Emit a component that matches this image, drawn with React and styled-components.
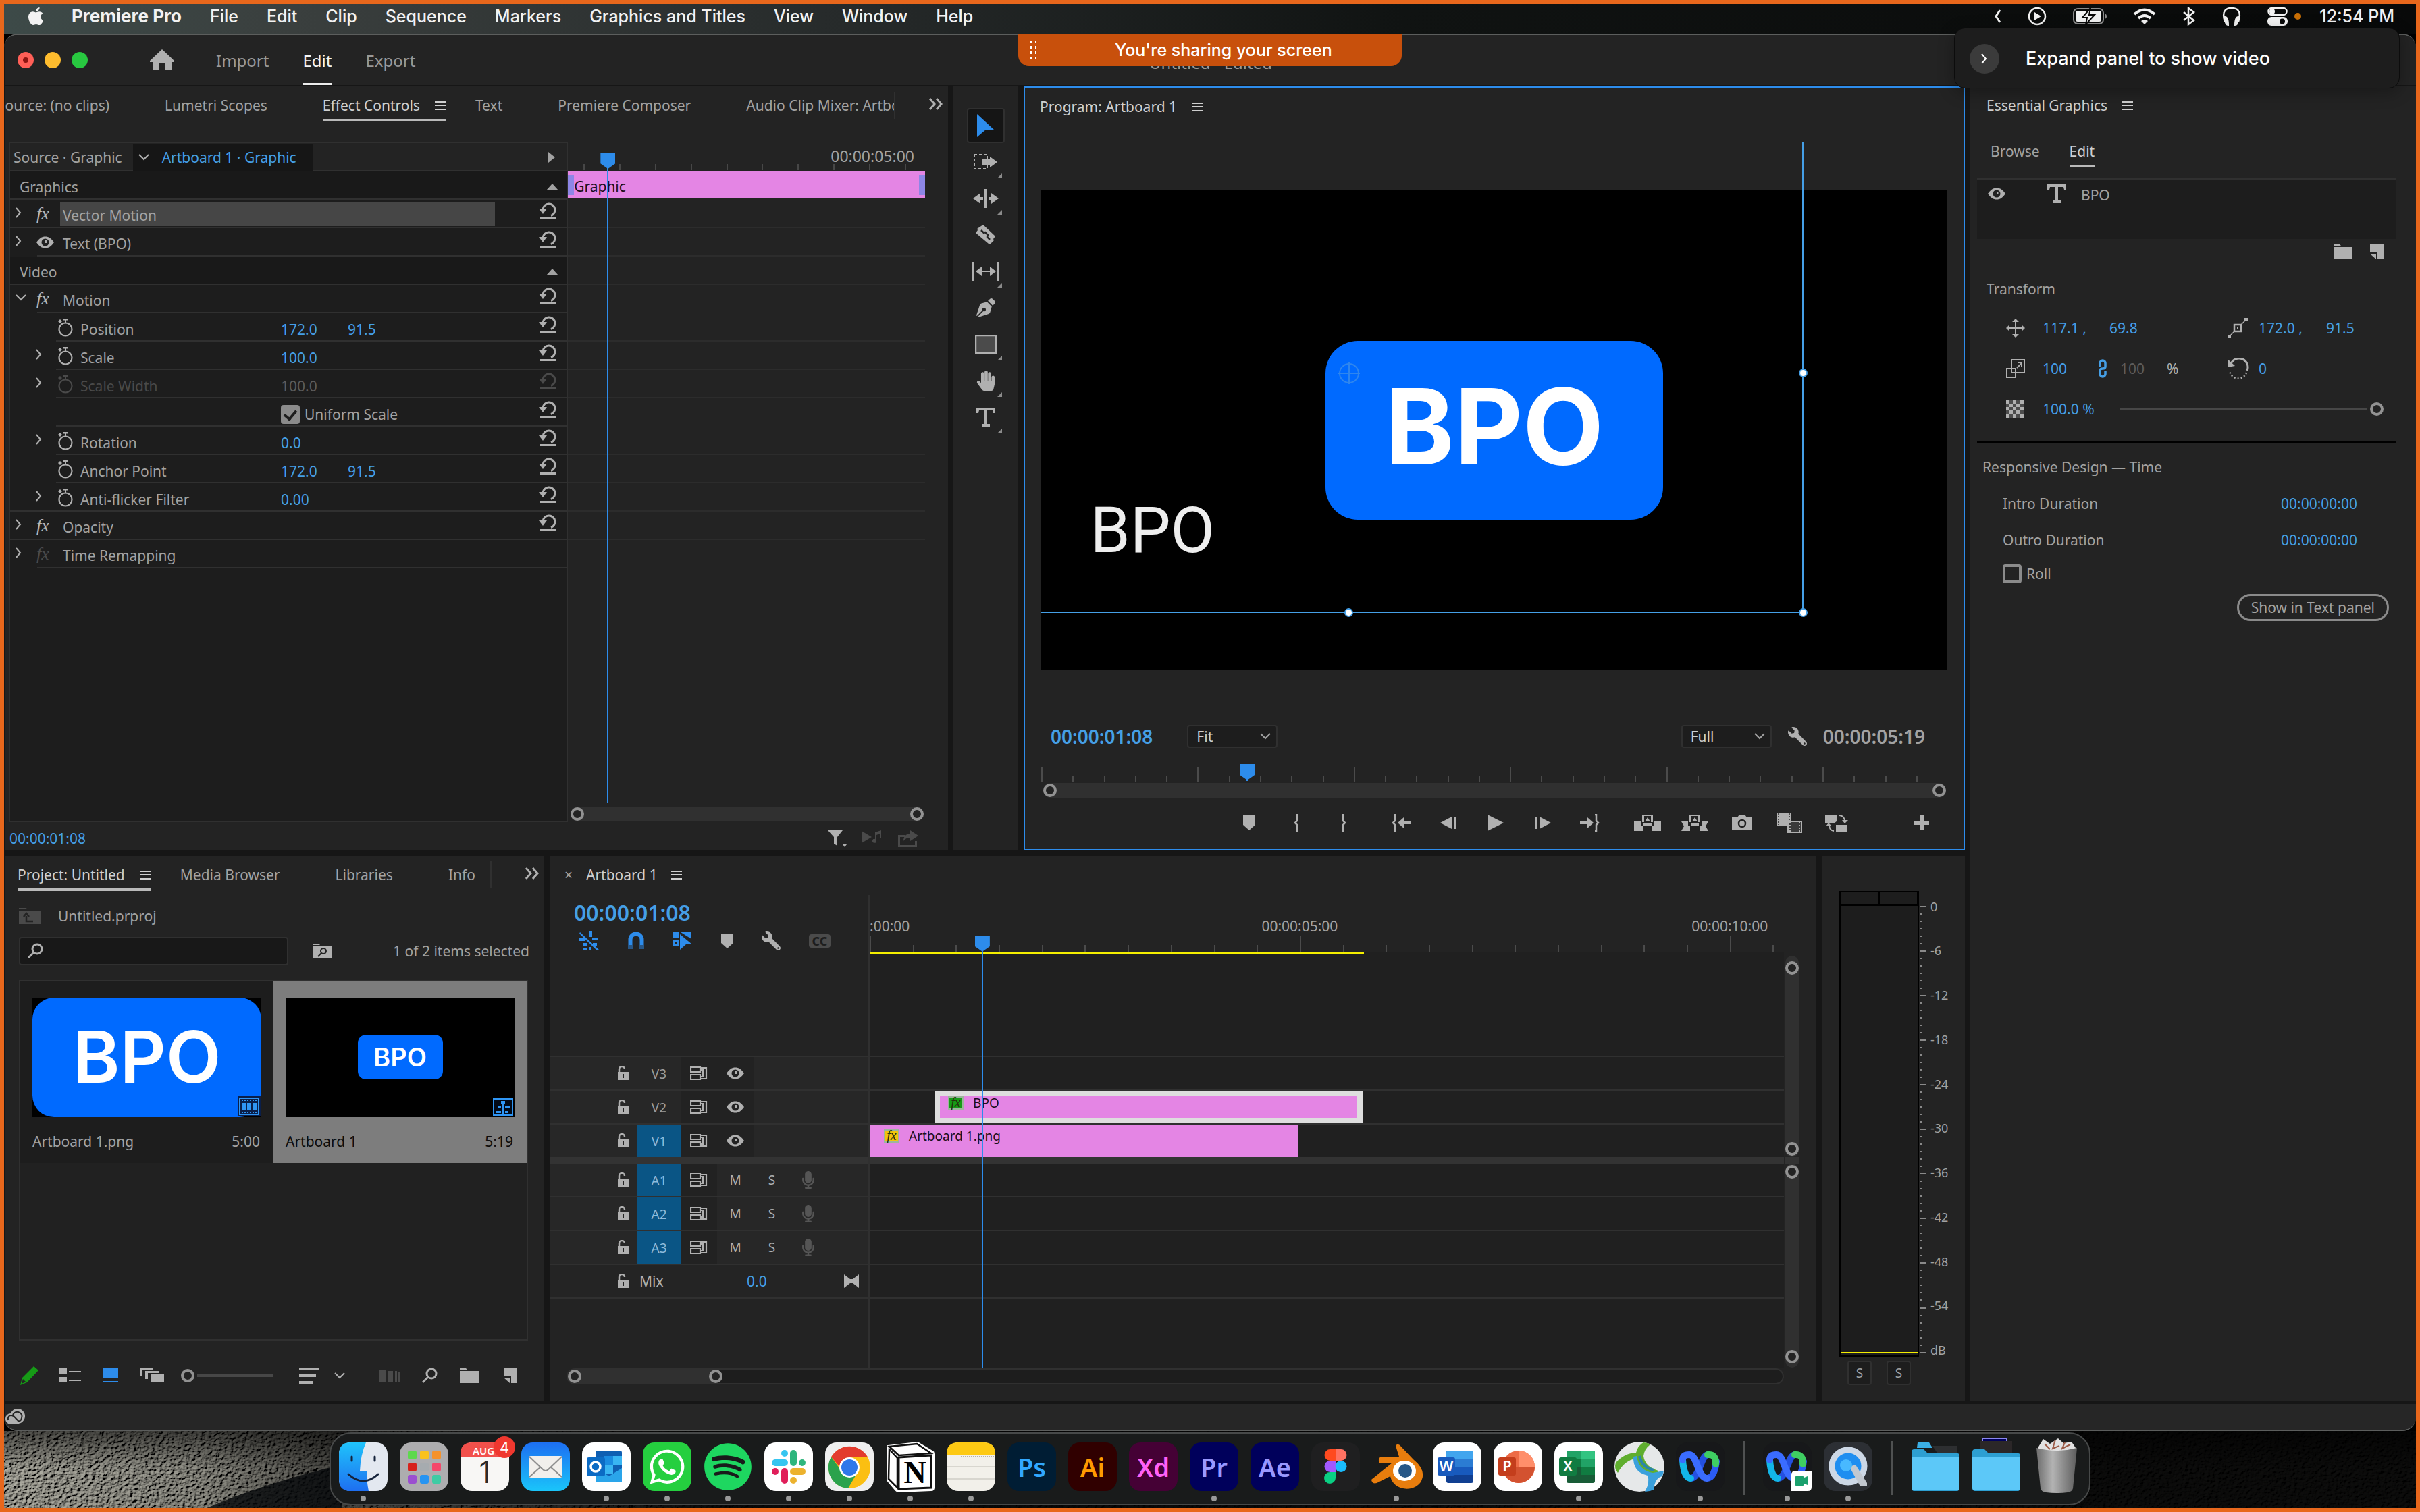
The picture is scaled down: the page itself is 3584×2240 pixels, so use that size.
import React from "react"
import styled, { createGlobalStyle, css } from "styled-components"
import {
  FaApple,
  FaHandPaper,
  FaMicrophone,
  FaPenNib,
  FaSpotify,
  FaWhatsapp,
  FaWrench,
} from "react-icons/fa"

const c = {
  frame: "#e8671c",
  gutter: "#161616",
  panel: "#232323",
  well: "#1d1d1d",
  line: "#303030",
  icon: "#b0b0b0",
  dim: "#4a4a4a",
  text: "#a2a2a2",
  bright: "#cfcfcf",
  blue: "#2d8ceb",
  hot: "#459fe6",
  clip: "#e485e4",
  brand: "#006aff",
}

const ui = `"Noto Sans", "Open Sans", sans-serif`
const system = `Inter, "Liberation Sans", sans-serif`

const GlobalStyle = createGlobalStyle`
  * {
    box-sizing: border-box;
  }

  body {
    margin: 0;
    background: #000;
    color: ${c.text};
    font: 21px/28px ${ui};
  }

  ul, ol, h1, h2, p {
    margin: 0;
    padding: 0;
    list-style: none;
    font: inherit;
  }

  button, input, select {
    margin: 0;
    padding: 0;
    border: 0;
    background: none;
    color: inherit;
    font: inherit;
  }

  a {
    color: inherit;
    text-decoration: none;
  }

  svg {
    display: block;
    flex: none;
  }
`

/* ---------- icons ---------- */

const icons = {
  menu: [16, 14, <path d="M0 1h16v2H0zM0 6h16v2H0zM0 12h16v2H0z" />],
  more: [22, 18, <path d="M2 1l7 8-7 8M12 1l7 8-7 8" fill="none" stroke="currentColor" strokeWidth="3" />],
  right: [10, 16, <path d="M1 1l6 7-6 7" fill="none" stroke="currentColor" strokeWidth="2" />],
  down: [16, 10, <path d="M1 1l7 7 7-7" fill="none" stroke="currentColor" strokeWidth="2" />],
  triRight: [12, 18, <path d="M1 1l10 8-10 8z" />],
  triUp: [18, 12, <path d="M9 1l9 10H0z" />],
  reset: [
    28,
    26,
    <>
      <path d="M7 10a9 9 0 1 1 12 9.5" fill="none" stroke="currentColor" strokeWidth="3" />
      <path d="M1 9h12l-6 8zM3 22h24v3H3z" />
    </>,
  ],
  watch: [
    24,
    28,
    <>
      <circle cx="12" cy="17" r="9.5" fill="none" stroke="currentColor" strokeWidth="2.2" />
      <path d="M8 1h8v2.5H8zM11 3h2v4h-2zM1 5l3-3 3 3-3 3z" />
    </>,
  ],
  eye: [
    26,
    18,
    <>
      <path d="M0 9C4 3 8 0.500 13 0.500S22 3 26 9C22 15 18 17.500 13 17.500S4 15 0 9z" />
      <circle cx="13" cy="9" r="5.5" fill="#222" />
      <path d="M13 6h2.500v4H13z" />
    </>,
  ],
  home: [36, 32, <path d="M18 0l18 17v2h-4v12h-9V20h-10v11H4V19H0v-2z" />],
  select: [26, 34, <path d="M0 0l25 23H13L0 34z" />],
  trackSelect: [
    36,
    24,
    <>
      <path d="M1 1h19v21H1z" fill="none" stroke="currentColor" strokeWidth="2" strokeDasharray="4 3" />
      <path d="M13 8h11V4l11 8-11 8v-4H13z" />
    </>,
  ],
  ripple: [38, 28, <path d="M17 0h4v28h-4zM0 14l11-8v6h4v4h-4v6zM38 14L27 6v6h-4v4h4v6z" />],
  razor: [
    32,
    32,
    <>
      <path d="M12 1l18 17-3 4 1 2-6 6-2-1L1 13l3-4-1-2z" />
      <path d="M9 9l4 4 2-1 4 4-1 3 4 4" fill="none" stroke="#232323" strokeWidth="2.5" />
    </>,
  ],
  slip: [40, 28, <path d="M0 0h3v28H0zM37 0h3v28h-3zM5 14l9-7v6h12V7l9 7-9 7v-6H14v6z" />],
  rect: [32, 28, <path d="M1 1h30v26H1z" fill="#4b4b4b" stroke="currentColor" strokeWidth="2.5" />],
  type: [28, 28, <path d="M0 0h28v8h-3l-1-4h-8v20h4v4H8v-4h4V4H4L3 8H0z" />],
  marker: [18, 22, <path d="M0 0h18v14l-9 8-9-8z" />],
  braceL: [10, 26, <path d="M8 1H6v9l-3 3 3 3v9h2" fill="none" stroke="currentColor" strokeWidth="2.5" />],
  braceR: [10, 26, <path d="M2 1h2v9l3 3-3 3v9H2" fill="none" stroke="currentColor" strokeWidth="2.5" />],
  goIn: [
    30,
    26,
    <>
      <path d="M8 1H6v9l-3 3 3 3v9h2" fill="none" stroke="currentColor" strokeWidth="2.5" />
      <path d="M10 13l9-8v6h11v4H19v6z" />
    </>,
  ],
  goOut: [
    30,
    26,
    <>
      <path d="M22 1h2v9l3 3-3 3v9h-2" fill="none" stroke="currentColor" strokeWidth="2.5" />
      <path d="M20 13l-9-8v6H0v4h11v6z" />
    </>,
  ],
  stepBack: [26, 20, <path d="M18 1v18L1 10zM21 1h3v18h-3z" />],
  play: [26, 24, <path d="M1 0l24 12L1 24z" />],
  stepOn: [26, 20, <path d="M8 1v18l17-9zM2 1h3v18H2z" />],
  lift: [40, 26, <path d="M0 11h10v6h4v-3h12v3h4v-6h10v14H27v-8H13v8H0zM12 1h16v11h-3V3H15v9h-3zM20 5l4 6h-8z" />],
  extract: [40, 26, <path d="M0 11h10v6h4v-3h12v3h4v-6h10l-4 7 4 7H27v-8H13v8H0l4-7zM12 1h16v11h-3V3H15v9h-3zM20 5l4 6h-8z" />],
  camera: [
    30,
    24,
    <>
      <path d="M0 4h8l3-4h8l3 4h8v19H0z" />
      <circle cx="15" cy="13" r="5" fill="none" stroke="#232323" strokeWidth="2.5" />
    </>,
  ],
  film: [
    38,
    30,
    <>
      <path d="M0 0h22v19H0z" />
      <path d="M17 13h20v16H17z" fill="#3a3a3a" stroke="currentColor" strokeWidth="2" />
      <path d="M3 1v17M19 1v10" stroke="#232323" strokeDasharray="2 2" strokeWidth="1.5" />
      <path d="M20 14v15M34 14v15" stroke="currentColor" strokeDasharray="2 2" strokeWidth="2" />
    </>,
  ],
  proxy: [
    34,
    28,
    <>
      <path d="M0 2h18v9l-5 4H0zM16 17h16v11H16z" />
      <path d="M21 3q8 1 8 9M6 17q0 8 7 9" fill="none" stroke="currentColor" strokeWidth="2" />
      <path d="M25 10h9l-5 5zM1 19h9l-5-5z" />
    </>,
  ],
  plus: [22, 22, <path d="M8 0h6v8h8v6h-8v8H8v-8H0V8h8z" />],
  search: [
    24,
    24,
    <path d="M10 14L2 22M15 2a7 7 0 1 1 0 14 7 7 0 0 1 0-14z" fill="none" stroke="currentColor" strokeWidth="3" />,
  ],
  folder: [28, 22, <path d="M0 0h9l2 2H0zM0 4h28v18H0z" />],
  page: [20, 22, <path d="M0 0h20v22h-9V12H0zM0 14h9v8z" />],
  folderUp: [
    32,
    24,
    <>
      <path d="M0 0h11l1 2H0zM0 4h32v20H0z" />
      <path d="M11 12v8h10M7 13l4-5 4 5" stroke="#232323" strokeWidth="2.5" fill="none" />
    </>,
  ],
  folderFind: [
    28,
    22,
    <>
      <path d="M0 0h9l2 2H0zM0 4h28v18H0z" />
      <path d="M13 14l-5 5M16 7a4 4 0 1 1 0 8 4 4 0 0 1 0-8z" stroke="#232323" strokeWidth="2" fill="none" />
    </>,
  ],
  funnel: [28, 26, <path d="M0 1h22l-8 10v13l-5-3V11zM22 22h6l-3 4z" />],
  playNote: [32, 22, <path d="M0 2l15 9-15 9zM20 15V4l9-3v12h-2V6l-5 2v9a3 3 0 1 1-2-3z" />],
  exportBox: [30, 26, <path d="M0 8h10v3H3v12h22v-6h3v9H0zM18 1l12 8-12 8v-5c-5 0-8 2-10 5 0-7 4-11 10-11z" />],
  pencil: [28, 28, <path d="M20 0l7 6L10 24 0 28l3-11zM4 19l-2 7 6-3z" fillRule="evenodd" />],
  listView: [32, 22, <path d="M0 0h11v8H0zM14 4h18v2H14zM0 13h11v8H0zM14 17h18v2H14z" />],
  iconView: [22, 22, <path d="M0 0h22v15H0zM0 19h22v2H0z" />],
  freeform: [36, 22, <path d="M0 0h20v3H4v9H0zM8 4h20v3H12v9H8zM16 8h20v13H16z" />],
  sort: [30, 26, <path d="M0 1h30v4H0zM0 11h25v4H0zM0 21h21v4H0z" />],
  storyboard: [32, 18, <path d="M0 0h10v18H0zM13 2h8v16h-8zM24 2h3v16h-3zM29 4h2v14h-2z" />],
  move: [28, 28, <path d="M13 5h2v8h8V9l5 5-5 5v-4h-8v8h4l-5 5-5-5h4v-8H5v4l-5-5 5-5v4h8V5H9l5-5 5 5z" />],
  anchor: [
    30,
    30,
    <>
      <path d="M2 28L28 2" stroke="currentColor" strokeWidth="1.5" />
      <path d="M0 25h5v5H0zM25 0h5v5h-5z" />
      <path d="M10 10h10v10H10z" fill="#232323" stroke="currentColor" strokeWidth="2.5" />
      <path d="M14 14h2v2h-2z" />
    </>,
  ],
  scale: [
    28,
    28,
    <path d="M8 1h19v19H8zM1 14h13v13H1zM16 13l7-7M17 5h6v6" fill="none" stroke="currentColor" strokeWidth="2" />,
  ],
  link: [
    16,
    28,
    <path d="M4 11V6a4 4 0 0 1 8 0v5q0 3-4 3t-4 3v5a4 4 0 0 0 8 0v-5" fill="none" stroke="currentColor" strokeWidth="3.5" />,
  ],
  rotate: [
    32,
    32,
    <>
      <path d="M5 9a13 13 0 0 1 24 10" fill="none" stroke="currentColor" strokeWidth="3" />
      <path d="M0 2l11 10-10 2z" />
      <path d="M28 22A13 13 0 0 1 3 20" fill="none" stroke="currentColor" strokeWidth="2.5" strokeDasharray="2 3" />
    </>,
  ],
  checker: [
    26,
    26,
    <>
      <path d="M0 0h26v26H0z" fill="#4d4d4d" />
      <path d="M0 0h5v5H0zM10 0h5v5h-5zM20 0h6v5h-6zM5 5h5v5H5zM15 5h5v5h-5zM0 10h5v5H0zM10 10h5v5h-5zM20 10h6v5h-6zM5 15h5v5H5zM15 15h5v5h-5zM0 20h5v6H0zM10 20h5v6h-5zM20 20h6v6h-6z" />
    </>,
  ],
  lock: [
    18,
    22,
    <>
      <path d="M3 10V5a4 4 0 0 1 8 0" fill="none" stroke="currentColor" strokeWidth="2.5" />
      <path d="M1 9h16v12H1z" />
      <path d="M8 12h2v6H8z" fill="#232323" />
    </>,
  ],
  sync: [
    26,
    20,
    <path d="M1 1h14v7H1zM1 12h14v7H1zM16 2h8v16h-8M16 5h3v10h-3" fill="none" stroke="currentColor" strokeWidth="2.2" />,
  ],
  nest: [
    30,
    28,
    <path d="M14 0h5v8h-5zM0 10h9v4H0zM19 9h9v4h-9zM5 17h7v4H5zM20 17h6v4h-6zM6 24h6v4H6zM15 23h3v5h-3zM1 1l28 26-2 2L0 3z" />,
  ],
  magnet: [
    24,
    26,
    <>
      <path d="M3.5 19v-8a8.5 8.5 0 0 1 17 0v8" fill="none" stroke="currentColor" strokeWidth="6" />
      <path d="M0 19h7v6H0zM17 19h7v6h-7z" opacity=".5" />
    </>,
  ],
  linked: [
    30,
    28,
    <path d="M0 1h9v9H0zM0 13h9v9H0zm3 3v3h3v-3zM12 1h16v10L12 1zM11 4l18 15h-9l-9 8z" fillRule="evenodd" />,
  ],
  bowtie: [22, 20, <path d="M0 0l9 7h4l9-7v20l-9-7H9l-9 7z" />],
}

const Icon = ({ name, color }) => {
  const [w, h, body] = icons[name]
  return (
    <svg width={w} height={h} viewBox={`0 0 ${w} ${h}`} fill="currentColor" color={color} aria-hidden="true">
      {body}
    </svg>
  )
}

/* ---------- shell ---------- */

const Frame = styled.div`
  display: flex;
  flex-direction: column;
  min-height: 100vh;
  border: 6px solid ${c.frame};
  background: #000;
`

const MenuBar = styled.nav`
  display: flex;
  align-items: center;
  height: 44px;
  padding: 0 32px 9px;
  background: linear-gradient(90deg, #3d4a48, #3a3f3e 12%, #262a2a 35%, #101312 58%, #080909);
  color: #f2f2f2;
  font: 500 25px/32px ${system};

  ul {
    display: flex;
    gap: 42px;
    margin-left: 38px;
  }
`

const AppName = styled.strong`
  font-size: 26px;
  font-weight: 700;
`

const Status = styled.div`
  display: flex;
  align-items: center;
  gap: 39px;
  margin-left: auto;
`

const PrivacyDot = styled.i`
  width: 10px;
  height: 10px;
  margin: 0 -12px 0 -29px;
  border-radius: 50%;
  background: #c96f06;
`

const Window = styled.div`
  position: relative;
  display: flex;
  flex: 1;
  flex-direction: column;
  padding-left: 2px;
  border: solid #5c5e5d;
  border-width: 2px 0;
  border-radius: 20px;
  background: ${c.gutter};
  overflow: hidden;
`

const TitleBar = styled.header`
  display: grid;
  grid-template-columns: 1fr auto 1fr;
  height: 76px;
  border-bottom: 2px solid ${c.gutter};
  background: ${c.panel};
  font-size: 24px;

  h1 {
    align-self: center;
    padding-top: 8px;
    color: #9a9a9a;
  }
`

const TitleLeft = styled.div`
  display: flex;
  align-items: center;
  padding-left: 18px;
`

const Light = styled.button`
  display: grid;
  place-items: center;
  width: 24px;
  height: 24px;
  margin-right: 16px;
  border-radius: 50%;
  background: ${p => p.$color};

  &:first-child:after {
    content: "";
    width: 8px;
    height: 8px;
    border-radius: 50%;
    background: #8e1512;
  }
`

const Home = styled.button`
  margin: 0 62px 0 76px;
  color: ${c.icon};
`

const Mode = styled.a`
  align-self: stretch;
  margin-right: 50px;
  padding-top: 24px;
  border-bottom: 3px solid ${p => (p.$on ? "#ececec" : "transparent")};
  color: ${p => (p.$on ? "#f4f4f4" : "#989898")};
`

const Workspace = styled.main`
  display: grid;
  flex: 1;
  grid-template-columns: minmax(0, 1fr) 660px;
  gap: 8px;
`

const Columns = styled.div`
  display: grid;
  grid-template-rows: 7fr 5fr;
  gap: 8px;
`

const TopRow = styled.div`
  display: grid;
  grid-template-columns: minmax(0, 700fr) 96px minmax(0, 699fr);
  gap: 8px;
`

const BottomRow = styled.div`
  display: grid;
  grid-template-columns: 798px minmax(0, 1fr) 212px;
  gap: 8px;
`

const Panel = styled.section`
  display: flex;
  flex-direction: column;
  min-width: 0;
  background: ${c.panel};
`

const StatusBar = styled.footer`
  display: flex;
  align-items: center;
  height: 38px;
  margin-top: 4px;
  background: #262626;
`

/* ---------- tabs ---------- */

const Tabs = styled.div`
  display: flex;
  gap: 44px;
  height: 52px;
  padding-left: ${p => p.$pad}px;
`

const TabList = styled.div`
  display: flex;
  flex: 1;
  gap: 44px;
  min-width: 0;
  overflow: hidden;

  ${p => p.$scrolled && css`
    & > :first-child {
      margin-left: -12px;
    }
  `}
`

const TabButton = styled.button`
  display: flex;
  flex: none;
  align-items: center;
  gap: 22px;
  padding: 8px ${p => (p.$on ? 0 : 38)}px 0 0;
  border-bottom: 4px solid ${p => (p.$on && !p.$plain ? "#b9b9b9" : "transparent")};
  color: ${p => (p.$on ? c.bright : c.text)};
`

const TabsEnd = styled.div`
  display: flex;
  align-items: center;
  width: 80px;
  height: 40px;
  margin: 8px 0 0 -44px;
  padding: 0 8px 4px 49px;
  border-left: 2px solid ${c.line};
  color: ${c.icon};
`

const Tab = ({ label, on, plain }) => (
  <TabButton $on={on} $plain={plain}>
    {label}
    {on && <Icon name="menu" />}
  </TabButton>
)

const HotValue = styled.input`
  width: ${p => p.$w || 99}px;
  height: 28px;
  color: ${p => (p.$dim ? "#5c5c5c" : c.hot)};
`

const Ring = styled.i`
  flex: none;
  width: 20px;
  height: 20px;
  border: 4px solid #929292;
  border-radius: 50%;
  background: ${c.panel};
`

const Fx = styled.em`
  color: ${p => (p.$dim ? "#4a4a4a" : "#b5b5b5")};
  font: italic 26px/28px "Liberation Serif", serif;
`

/* ---------- effect controls ---------- */

const EffectBody = styled.div`
  display: grid;
  flex: 1;
  grid-template-columns: 61fr 39fr;
  margin: 30px 34px 0 6px;
`

const EffectList = styled.ul`
  border: solid ${c.line};
  border-width: 2px 2px 2px 1px;
  background: ${c.well};
`

const SourceRow = styled.li`
  display: flex;
  align-items: center;
  height: 42px;
  padding: 2px 16px 0 5px;
  border-bottom: 2px solid ${c.line};
  background: ${c.panel};
`

const SourceMenu = styled.button`
  display: flex;
  align-items: center;
  gap: 19px;
  height: 40px;
  margin: 0 auto 0 16px;
  padding: 0 24px 0 8px;
  background: ${c.gutter};
  color: ${c.hot};
  white-space: nowrap;

  svg {
    color: ${c.icon};
  }
`

const EffectRow = styled.li`
  display: grid;
  grid-template-columns: ${p => (p.$child ? "62px 34px 297px 1fr 28px" : "31px 35px 1fr 92px")};
  align-items: center;
  height: 42px;
  padding: 0 14px 0 8px;
  background: linear-gradient(${c.line}, ${c.line}) ${p => p.$rule || 0}px 100% / 100% 2px no-repeat;
  color: ${p => (p.$dim ? c.dim : c.text)};

  & > :last-child {
    justify-self: end;
    margin-bottom: 8px;
  }
`

const Caret = styled.button`
  justify-self: ${p => (p.$child ? "end" : "start")};
  margin: 0 ${p => (p.$child ? 22 : 0)}px 4px 0;
  color: ${c.icon};
`

const GroupRow = styled.li`
  display: flex;
  align-items: center;
  justify-content: space-between;
  height: 42px;
  padding: 6px 12px 0 14px;
  border-bottom: 2px solid ${c.line};
  background: #191919;
`

const EffectName = styled.span`
  height: 36px;
  padding: 6px 4px 0;
  background: ${p => (p.$on ? "#464646" : "none")};
`

const PropName = styled.label`
  padding-top: 6px;
`

const Values = styled.div`
  display: flex;
  align-items: center;
  padding-top: 6px;
`

const Check = styled.label`
  display: flex;
  align-items: center;
  gap: 7px;
  padding-top: ${p => p.$top || 0}px;

  input {
    appearance: none;
    display: grid;
    place-items: center;
    width: 28px;
    height: 28px;
    border: 4px solid #8b8b8b;
    border-radius: 4px;
  }

  input:checked {
    background: #8b8b8b;
  }

  input:checked:after {
    content: "";
    width: 8px;
    height: 14px;
    margin-bottom: 4px;
    border: solid #1d1d1d;
    border-width: 0 4px 4px 0;
    transform: rotate(40deg);
  }
`

const KeyArea = styled.div`
  position: relative;
  display: flex;
  flex-direction: column;
  padding-top: 2px;
`

const KeyRuler = styled.div`
  display: flex;
  flex-direction: column;
  align-items: flex-end;
  justify-content: space-between;
  height: 42px;
  padding: 7px 16px 2px 0;
  font-size: 23px;
  line-height: 24px;
`

const KeyTicks = styled.div`
  display: flex;
  align-self: stretch;
  justify-content: space-between;
  margin: 0 12px 0 23px;

  i {
    width: 2px;
    height: 9px;
    background: #474747;
  }
`

const KeyClip = styled.div`
  height: 40px;
  margin-bottom: 2px;
  padding: 8px 9px 0;
  background:
    linear-gradient(#8d86e6, #8d86e6) 0 50% / 9px 30px no-repeat,
    linear-gradient(#8d86e6, #8d86e6) 100% 50% / 9px 30px no-repeat,
    ${c.clip};
  color: #1a0d1a;
`

const KeyRow = styled.div`
  height: 42px;
  border-bottom: 2px solid ${p => (p.$blank ? "transparent" : "#2c2c2c")};
`

const Playhead = styled.div`
  position: absolute;
  top: ${p => p.$top}px;
  bottom: ${p => p.$bottom}px;
  width: 22px;
  margin-left: -11px;
  background: linear-gradient(${c.blue}, ${c.blue}) 50% 20px / 2px 100% no-repeat;
  pointer-events: none;

  &:before {
    content: "";
    display: block;
    height: 24px;
    background: ${c.blue};
    clip-path: polygon(0 0, 100% 0, 100% 68%, 50% 100%, 0 68%);
  }
`

const ZoomBar = styled.div`
  display: flex;
  align-items: center;
  justify-content: space-between;
  height: 22px;
  margin: ${p => p.$margin};
  border-radius: 11px;
  background: ${c.line};
`

const PanelFoot = styled.div`
  display: flex;
  align-items: center;
  height: 42px;
  padding: 6px 44px 0 6px;
  color: ${c.hot};
`

const FootIcons = styled.div`
  display: flex;
  gap: 22px;
  margin-left: auto;
  color: ${c.dim};
`

const effects = [
  { group: "Graphics" },
  { name: "Vector Motion", on: true, icon: "fx" },
  { name: "Text (BPO)", icon: "eye", rule: 40 },
  { group: "Video" },
  { name: "Motion", icon: "fx", open: true, rule: 40 },
  { prop: "Position", values: ["172.0", "91.5"] },
  { prop: "Scale", values: ["100.0"], caret: true },
  { prop: "Scale Width", values: ["100.0"], caret: true, dim: true },
  { check: "Uniform Scale" },
  { prop: "Rotation", values: ["0.0"], caret: true },
  { prop: "Anchor Point", values: ["172.0", "91.5"] },
  { prop: "Anti-flicker Filter", values: ["0.00"], caret: true, rule: 0 },
  { name: "Opacity", icon: "fx" },
  { name: "Time Remapping", icon: "fx", off: true, rule: 40 },
]

const playhead = 1.31
const effectSpan = 11.7

const EffectItem = ({ item }) => {
  if (item.group) {
    return (
      <GroupRow>
        {item.group}
        <Icon name="triUp" />
      </GroupRow>
    )
  }
  if (item.name) {
    return (
      <EffectRow $rule={item.rule}>
        <Caret aria-label={`Toggle ${item.name}`}>
          <Icon name={item.open ? "down" : "right"} />
        </Caret>
        {item.icon === "fx" ? <Fx $dim={item.off}>fx</Fx> : <Icon name="eye" color={c.icon} />}
        <EffectName $on={item.on}>{item.name}</EffectName>
        {item.off ? <span /> : <Icon name="reset" color={c.icon} />}
      </EffectRow>
    )
  }
  const id = (item.prop || item.check).replace(/\W/g, "")
  return (
    <EffectRow $child $dim={item.dim} $rule={item.rule ?? 68}>
      {item.caret ? (
        <Caret $child aria-label={`Toggle ${item.prop}`}>
          <Icon name="right" />
        </Caret>
      ) : (
        <span />
      )}
      {item.prop ? <Icon name="watch" color={item.dim ? c.dim : c.icon} /> : <span />}
      {item.prop ? <PropName htmlFor={id}>{item.prop}</PropName> : <span />}
      {item.prop ? (
        <Values>
          {item.values.map((v, i) => (
            <HotValue key={v} id={i ? undefined : id} aria-label={item.prop} $dim={item.dim} defaultValue={v} />
          ))}
        </Values>
      ) : (
        <Check $top={6}>
          <input type="checkbox" defaultChecked />
          {item.check}
        </Check>
      )}
      <Icon name="reset" color={item.dim ? c.dim : c.icon} />
    </EffectRow>
  )
}

const EffectControls = () => (
  <Panel>
    <Tabs $pad={0}>
      <TabList $scrolled>
        <Tab label="Source: (no clips)" />
        <Tab label="Lumetri Scopes" />
        <Tab label="Effect Controls" on />
        <Tab label="Text" />
        <Tab label="Premiere Composer" />
        <Tab label="Audio Clip Mixer: Artboard 1" />
      </TabList>
      <TabsEnd>
        <Icon name="more" />
      </TabsEnd>
    </Tabs>
    <EffectBody>
      <EffectList>
        <SourceRow>
          Source · Graphic
          <SourceMenu>
            <Icon name="down" />
            Artboard 1 · Graphic
          </SourceMenu>
          <Icon name="triRight" />
        </SourceRow>
        {effects.map(item => (
          <EffectItem key={item.group || item.name || item.prop || item.check} item={item} />
        ))}
      </EffectList>
      <KeyArea>
        <KeyRuler>
          00:00:05:00
          <KeyTicks>
            {Array.from({ length: 10 }, (_, i) => (
              <i key={i} />
            ))}
          </KeyTicks>
        </KeyRuler>
        <KeyClip>Graphic</KeyClip>
        {effects.slice(1).map((item, i) => (
          <KeyRow key={i} $blank={["Motion", "Uniform Scale", "Time Remapping"].includes(item.name || item.check)} />
        ))}
        <ZoomBar $margin="auto 2px 1px 4px">
          <Ring />
          <Ring />
        </ZoomBar>
        <Playhead $top={16} $bottom={28} style={{ left: `${(playhead / effectSpan) * 100}%` }} />
      </KeyArea>
    </EffectBody>
    <PanelFoot>
      00:00:01:08
      <FootIcons>
        <Icon name="funnel" color={c.icon} />
        <Icon name="playNote" />
        <Icon name="exportBox" />
      </FootIcons>
    </PanelFoot>
  </Panel>
)

/* ---------- tools ---------- */

const ToolRail = styled(Panel)`
  align-items: center;
  gap: 2px;
  padding-top: 32px;
`

const Tool = styled.button`
  position: relative;
  display: grid;
  place-items: center;
  width: 56px;
  height: 52px;
  border: 2px solid ${p => (p.$on ? "#303030" : "transparent")};
  border-radius: 4px;
  background: ${p => (p.$on ? "#151515" : "none")};
  color: ${p => (p.$on ? c.blue : c.icon)};

  ${p => p.$more && css`
    &:after {
      content: "";
      position: absolute;
      right: 2px;
      bottom: 0;
      width: 7px;
      height: 7px;
      background: #8b8b8b;
      clip-path: polygon(100% 0, 100% 100%, 0 100%);
    }
  `}
`

const Tools = () => (
  <ToolRail aria-label="Tools">
    <Tool $on aria-label="Selection"><Icon name="select" /></Tool>
    <Tool $more aria-label="Track Select"><Icon name="trackSelect" /></Tool>
    <Tool $more aria-label="Ripple Edit"><Icon name="ripple" /></Tool>
    <Tool aria-label="Razor"><Icon name="razor" /></Tool>
    <Tool $more aria-label="Slip"><Icon name="slip" /></Tool>
    <Tool aria-label="Pen"><FaPenNib size={28} /></Tool>
    <Tool $more aria-label="Rectangle"><Icon name="rect" /></Tool>
    <Tool $more aria-label="Hand"><FaHandPaper size={30} /></Tool>
    <Tool $more aria-label="Type"><Icon name="type" /></Tool>
  </ToolRail>
)

/* ---------- program monitor ---------- */

const Monitor = styled(Panel)`
  border: 2px solid ${c.blue};
`

const Stage = styled.div`
  position: relative;
  margin: 100px 24px auto;
  aspect-ratio: 189 / 100;
  background: #000;
`

const BrandCard = styled.div`
  display: grid;
  place-items: center;
  border-radius: ${p => p.$radius}px;
  background: ${c.brand};
  color: #fff;
  font: ${p => p.$weight || 600} ${p => p.$size}px/1 ${system};
`

const StageCard = styled(BrandCard)`
  position: absolute;
  top: 31.4%;
  left: 31.4%;
  width: 37.2%;
  height: 37.3%;
  padding-bottom: 10px;
`

const Caption = styled.span`
  position: absolute;
  top: 62.5%;
  left: 5.4%;
  color: #eee;
  font: 95px/120px Roboto, sans-serif;
`

const Bounds = styled.div`
  position: absolute;
  top: -10%;
  right: 15.9%;
  bottom: 11.8%;
  left: 0;
  border: solid ${c.hot};
  border-width: 0 2px 2px 0;
`

const Handle = styled.i`
  position: absolute;
  left: ${p => p.$x}%;
  top: ${p => p.$y}%;
  width: 13px;
  height: 13px;
  margin: -7px;
  border: 2px solid ${c.hot};
  border-radius: 50%;
  background: #fff;
`

const Anchor = styled.svg`
  position: absolute;
  left: 34%;
  top: 38.2%;
  margin: -16px;
`

const MonitorBar = styled.div`
  display: flex;
  align-items: center;
  padding: 0 57px 0 38px;
  line-height: 34px;
`

const Timecode = styled.span`
  color: ${p => (p.$hot ? c.hot : c.text)};
  font-size: ${p => p.$size}px;
  font-weight: 600;
`

const SelectWrap = styled.label`
  display: grid;
  align-items: center;
  margin: ${p => p.$margin};

  select,
  svg {
    grid-area: 1 / 1;
  }

  svg {
    justify-self: end;
    margin-right: 10px;
    pointer-events: none;
  }

  select {
    appearance: none;
    width: 134px;
    height: 34px;
    padding: 0 12px;
    border: 2px solid ${c.line};
    border-radius: 4px;
    background: ${c.well};
    color: ${c.bright};
    line-height: 28px;
  }
`

const Wrench = styled(FaWrench)`
  width: 28px;
  height: 28px;
  margin-right: ${p => p.$gap || 0}px;
  color: ${c.icon};
  transform: scaleX(-1);
`

const MonitorRuler = styled.div`
  position: relative;
  display: flex;
  align-items: flex-end;
  height: 28px;
  margin: 22px 24px 0;

  i {
    flex: 1;
    height: 9px;
    border-left: 2px solid #4b4b4b;
  }

  i:nth-child(5n + 1) {
    height: 21px;
  }
`

const Transport = styled.div`
  display: flex;
  justify-content: flex-end;
  gap: 15px;
  padding: 21px 27px 23px 0;
  color: ${c.icon};
`

const TransportGroup = styled.div`
  display: flex;

  &:last-child {
    margin-left: 41px;
  }
`

const TransportButton = styled.button`
  display: grid;
  place-items: center;
  width: 70px;
  height: 32px;
`

const transport = [
  ["marker", "braceL", "braceR"],
  ["goIn", "stepBack", "play", "stepOn", "goOut"],
  ["lift", "extract", "camera", "film", "proxy"],
  ["plus"],
]

const Program = () => (
  <Monitor>
    <Tabs $pad={22}>
      <Tab label="Program: Artboard 1" on plain />
    </Tabs>
    <Stage>
      <StageCard $radius={48} $size={156} $weight={700}>BPO</StageCard>
      <Caption>BPO</Caption>
      <Bounds />
      <Anchor width="32" height="32" viewBox="0 0 32 32" fill="none" stroke="#2f86ee" strokeWidth="2">
        <circle cx="16" cy="16" r="14" />
        <path d="M0 16h32M16 0v32" />
      </Anchor>
      <Handle $x={84.1} $y={38.2} />
      <Handle $x={34} $y={88.2} />
      <Handle $x={84.1} $y={88.2} />
    </Stage>
    <MonitorBar>
      <Timecode $hot $size={28}>00:00:01:08</Timecode>
      <SelectWrap $margin="0 auto 0 51px">
        <select aria-label="Zoom level"><option>Fit</option></select>
        <Icon name="down" />
      </SelectWrap>
      <SelectWrap $margin="0 24px 0 0">
        <select aria-label="Playback resolution"><option>Full</option></select>
        <Icon name="down" />
      </SelectWrap>
      <Wrench $gap={24} />
      <Timecode $size={28}>00:00:05:19</Timecode>
    </MonitorBar>
    <MonitorRuler>
      {Array.from({ length: 29 }, (_, i) => (
        <i key={i} />
      ))}
      <Playhead $top={2} $bottom={1} style={{ left: `${(playhead / 5.76) * 100}%` }} />
    </MonitorRuler>
    <ZoomBar $margin="2px 26px 0 27px">
      <Ring />
      <Ring />
    </ZoomBar>
    <Transport>
      {transport.map(group => (
        <TransportGroup key={group[0]}>
          {group.map(name => (
            <TransportButton key={name} aria-label={name}>
              <Icon name={name} />
            </TransportButton>
          ))}
        </TransportGroup>
      ))}
    </Transport>
  </Monitor>
)

/* ---------- project ---------- */

const Crumb = styled.div`
  display: flex;
  align-items: center;
  gap: 26px;
  height: 68px;
  padding: 6px 20px 0;

  svg {
    color: ${c.dim};
  }
`

const Finder = styled.div`
  display: flex;
  align-items: center;
  padding: 0 22px 22px 20px;

  button {
    margin: 0 auto 0 36px;
    color: ${c.icon};
  }
`

const SearchBox = styled.label`
  display: flex;
  align-items: center;
  gap: 10px;
  width: 399px;
  height: 42px;
  padding-left: 10px;
  border: 2px solid ${c.line};
  border-radius: 4px;
  background: #181818;
  color: ${c.icon};
`

const Bin = styled.ul`
  display: grid;
  flex: 1;
  grid-template-columns: 1fr 1fr;
  align-content: start;
  margin: 0 24px 0 20px;
  border: 2px solid ${c.line};
  background: #212121;
`

const BinItem = styled.li`
  padding: 24px 18px 18px;
  background: ${p => (p.$on ? "#7d7d7d" : c.well)};
  color: ${p => (p.$on ? "#0c0c0c" : c.text)};
`

const Thumb = styled.div`
  position: relative;
  display: grid;
  place-items: center;
  height: 177px;
  background: #000;

  svg {
    position: absolute;
    right: 1px;
    bottom: 1px;
  }
`

const BinLabel = styled.div`
  display: flex;
  justify-content: space-between;
  padding: 22px 2px 0 0;
`

const WideCard = styled(BrandCard)`
  width: 100%;
  height: 100%;
`

const SmallCard = styled(BrandCard)`
  width: 126px;
  height: 66px;
`

const BinTools = styled.div`
  display: flex;
  align-items: center;
  height: 90px;
  padding: 14px 40px 0 22px;
  color: ${c.icon};
`

const Spacer = styled.i`
  flex: none;
  width: ${p => p.$w}px;
`

const Range = styled.input`
  appearance: none;
  width: ${p => p.$w}px;
  height: 20px;
  background: linear-gradient(#474747, #474747) ${p => p.$shift} 50% / calc(100% - 24px) 4px no-repeat;

  &::-webkit-slider-thumb {
    appearance: none;
    width: 20px;
    height: 20px;
    border: 4px solid #929292;
    border-radius: 50%;
    background: ${c.panel};
  }
`

const Project = () => (
  <Panel>
    <Tabs $pad={18}>
      <TabList>
        <Tab label="Project: Untitled" on />
        <Tab label="Media Browser" />
        <Tab label="Libraries" />
        <Tab label="Info" />
      </TabList>
      <TabsEnd>
        <Icon name="more" />
      </TabsEnd>
    </Tabs>
    <Crumb>
      <Icon name="folderUp" />
      Untitled.prproj
    </Crumb>
    <Finder>
      <SearchBox>
        <Icon name="search" />
        <input type="search" aria-label="Search project" />
      </SearchBox>
      <button aria-label="New search bin">
        <Icon name="folderFind" />
      </button>
      1 of 2 items selected
    </Finder>
    <Bin>
      <BinItem>
        <Thumb>
          <WideCard $radius={32} $size={106}>BPO</WideCard>
          <svg width="34" height="30" viewBox="0 0 34 30">
            <path d="M0 0h34v30H0z" fill="#0a1f4a" />
            <path d="M3 3h28v24H3z" fill="none" stroke="#2f96f5" strokeWidth="2" />
            <path d="M6 6h22M6 24h22" stroke="#2f96f5" strokeWidth="2" strokeDasharray="2 2" />
            <path d="M6 10h6v10H6zM14 10h6v10h-6zM22 10h6v10h-6z" fill="#2f96f5" />
          </svg>
        </Thumb>
        <BinLabel>
          <span>Artboard 1.png</span>
          <span>5:00</span>
        </BinLabel>
      </BinItem>
      <BinItem $on>
        <Thumb>
          <SmallCard $radius={12} $size={38}>BPO</SmallCard>
          <svg width="32" height="28" viewBox="0 0 32 28">
            <path d="M2 2h28v24H2z" fill="#020a18" stroke="#2f96f5" strokeWidth="2" />
            <path d="M13 5h6v4h-2v15h-2V9h-2zM9 13h4v3H9zM19 13h8v3h-8zM5 20h8v3H5zM19 20h4v3h-4z" fill="#2f96f5" />
          </svg>
        </Thumb>
        <BinLabel>
          <span>Artboard 1</span>
          <span>5:19</span>
        </BinLabel>
      </BinItem>
    </Bin>
    <BinTools>
      <Icon name="pencil" color="#169b16" />
      <Spacer $w={30} />
      <Icon name="listView" />
      <Spacer $w={33} />
      <Icon name="iconView" color={c.blue} />
      <Spacer $w={32} />
      <Icon name="freeform" />
      <Spacer $w={25} />
      <Range type="range" aria-label="Icon size" $w={137} $shift="100%" defaultValue="0" />
      <Spacer $w={38} />
      <Icon name="sort" />
      <Spacer $w={22} />
      <Icon name="down" />
      <Spacer $w={50} />
      <Icon name="storyboard" color={c.dim} />
      <Spacer $w={31} />
      <Icon name="search" />
      <Spacer $w={33} />
      <Icon name="folder" />
      <Spacer $w={37} />
      <Icon name="page" />
    </BinTools>
  </Panel>
)

/* ---------- timeline ---------- */

const visibleSeconds = 10.63
const at = seconds => `${(seconds / visibleSeconds) * 100}%`

const TimelineTab = styled.div`
  display: flex;
  align-items: center;
  gap: 20px;
  height: 58px;
  padding: 0 0 2px 22px;
  color: ${c.bright};

  button {
    color: ${c.text};
  }
`

const TimelineBody = styled.div`
  display: grid;
  flex: 1;
  grid-template-columns: 474px minmax(0, 1fr) 48px;
`

const Heads = styled.div`
  border-right: 2px solid ${c.line};
`

const TimelineTop = styled.div`
  height: 88px;
  padding: 6px 0 0 36px;
  line-height: 40px;
`

const TimelineIcons = styled.div`
  display: flex;
  align-items: center;
  gap: 42px;
  padding: 4px 0 0 8px;
  color: ${c.blue};
`

const Captions = styled.button`
  width: 32px;
  height: 20px;
  border-radius: 4px;
  background: #4b4b4b;
  color: #1d1d1d;
  font-size: 18px;
  font-weight: 800;
  line-height: 20px;
`

const Blank = styled.div`
  height: 152px;
  border-bottom: 2px solid ${c.line};
`

const Track = styled.div`
  display: flex;
  align-items: center;
  height: 50px;
  padding-left: 100px;
  border-bottom: 2px solid ${c.line};
  background: #272727;
  color: ${c.icon};
`

const TrackName = styled.button`
  align-self: stretch;
  width: 64px;
  margin-left: 12px;
  padding-top: 2px;
  background: ${p => (p.$on ? "#0a5585" : "none")};
  color: ${p => (p.$on ? "#8fbbdb" : "#9c9c9c")};
  font-size: 19px;
`

const TrackCell = styled.button`
  display: grid;
  place-items: center;
  align-self: stretch;
  width: 54px;
  background: ${p => (p.$plain ? "none" : "#222")};
  color: ${p => (p.$dim ? "#555" : c.icon)};
  font-size: 19px;
`

const Divide = styled.div`
  flex: none;
  height: 10px;
  margin-top: ${p => (p.$flush ? 0 : -2)}px;
  background: #333;
`

const MixRow = styled(Track)`
  justify-content: space-between;
  padding-right: 14px;
  background: #242424;

  span {
    margin: 0 auto 0 15px;
  }
`

const Lanes = styled.div`
  position: relative;
  display: flex;
  flex-direction: column;
  background: #202020;
`

const TimeRuler = styled.div`
  height: 84px;
  padding-top: 32px;
  background: ${c.panel};
`

const RulerLabels = styled.div`
  position: relative;
  height: 29px;

  span {
    position: absolute;
  }

  span:not(:first-child) {
    transform: translateX(-50%);
  }
`

const RulerTicks = styled.div`
  display: flex;
  align-items: flex-end;
  height: 23px;
  overflow: hidden;

  i {
    flex: none;
    height: 10px;
    border-left: 2px solid #4b4b4b;
  }

  i:nth-child(10n + 1) {
    height: 23px;
  }
`

const WorkArea = styled.div`
  height: 4px;
  background: #f4ee00;
`

const Lane = styled.div`
  height: 50px;
  border-bottom: 2px solid ${c.line};
`

const Clip = styled.div`
  display: flex;
  gap: 14px;
  height: 48px;
  padding: ${p => (p.$on ? "0 12px" : "7px 20px")};
  border: solid #dedede;
  border-width: ${p => (p.$on ? "8px" : "0 0 0 1px")};
  background: ${c.clip};
  color: #1a0d1a;
  font-size: 19px;
  line-height: 20px;
`

const FxBadge = styled.em`
  width: 23px;
  height: 20px;
  border: 2px solid #9db59d;
  background: ${p => p.$color};
  color: #24310c;
  font: italic 20px/15px "Liberation Serif", serif;
  text-align: center;
`

const VScroll = styled.div`
  display: grid;
  grid-template-rows: 298px 10px 1fr;
  width: 20px;
  margin: 90px 0 0 2px;
`

const VBar = styled.div`
  display: flex;
  flex-direction: column;
  align-items: center;
  justify-content: space-between;
  padding: ${p => p.$pad};
  border-radius: 10px;
  background: ${c.line};
`

const HTrack = styled.div`
  margin: 1px 48px 25px 25px;
  border: 2px solid ${c.line};
  border-radius: 12px;
  background: ${c.well};
`

const HThumb = styled.div`
  display: flex;
  align-items: center;
  justify-content: space-between;
  width: 229px;
  height: 20px;
  border-radius: 10px;
  background: ${c.line};
`

const TrackHead = ({ name, on, audio }) => (
  <Track>
    <Icon name="lock" />
    <TrackName $on={on}>{name}</TrackName>
    <TrackCell aria-label="Sync lock"><Icon name="sync" /></TrackCell>
    {audio ? (
      <>
        <TrackCell $plain>M</TrackCell>
        <TrackCell $plain>S</TrackCell>
        <TrackCell $plain $dim aria-label="Record"><FaMicrophone size={26} /></TrackCell>
      </>
    ) : (
      <TrackCell aria-label="Toggle output"><Icon name="eye" /></TrackCell>
    )}
  </Track>
)

const Timeline = () => (
  <Panel>
    <TimelineTab>
      <button aria-label="Close">×</button>
      Artboard 1
      <Icon name="menu" />
    </TimelineTab>
    <TimelineBody>
      <Heads>
        <TimelineTop>
          <Timecode $hot $size={32}>00:00:01:08</Timecode>
          <TimelineIcons>
            <Icon name="nest" />
            <Icon name="magnet" />
            <Icon name="linked" />
            <Icon name="marker" color={c.icon} />
            <Wrench />
            <Captions>CC</Captions>
          </TimelineIcons>
        </TimelineTop>
        <Blank />
        <TrackHead name="V3" />
        <TrackHead name="V2" />
        <TrackHead name="V1" on />
        <Divide />
        <TrackHead name="A1" on audio />
        <TrackHead name="A2" on audio />
        <TrackHead name="A3" on audio />
        <MixRow>
          <Icon name="lock" />
          <span>Mix</span>
          <HotValue aria-label="Mix level" $w={144} defaultValue="0.0" />
          <Icon name="bowtie" />
        </MixRow>
      </Heads>
      <Lanes>
        <TimeRuler>
          <RulerLabels>
            <span>:00:00</span>
            <span style={{ left: at(5) }}>00:00:05:00</span>
            <span style={{ left: at(10) }}>00:00:10:00</span>
          </RulerLabels>
          <RulerTicks>
            {Array.from({ length: 22 }, (_, i) => (
              <i key={i} style={{ width: at(0.5) }} />
            ))}
          </RulerTicks>
        </TimeRuler>
        <WorkArea style={{ width: at(5.75) }} />
        <Blank />
        <Lane />
        <Lane>
          <Clip $on style={{ marginLeft: at(0.754), width: at(4.98) }}>
            <FxBadge $color="#169b16">fx</FxBadge>
            BPO
          </Clip>
        </Lane>
        <Lane>
          <Clip style={{ width: at(4.98) }}>
            <FxBadge $color="#f2c40c">fx</FxBadge>
            Artboard 1.png
          </Clip>
        </Lane>
        <Divide />
        <Lane />
        <Lane />
        <Lane />
        <Lane />
        <Playhead $top={60} $bottom={0} style={{ left: at(playhead) }} />
      </Lanes>
      <VScroll>
        <VBar $pad="8px 0 2px">
          <Ring />
          <Ring />
        </VBar>
        <Divide $flush />
        <VBar $pad="2px 0 6px">
          <Ring />
          <Ring />
        </VBar>
      </VScroll>
    </TimelineBody>
    <HTrack>
      <HThumb>
        <Ring />
        <Ring />
      </HThumb>
    </HTrack>
  </Panel>
)

/* ---------- audio meters ---------- */

const Meters = styled.div`
  display: grid;
  flex: 1;
  grid-template-columns: 118px 10px 1fr;
  margin: 52px 0 0 26px;
`

const MeterBox = styled.div`
  display: grid;
  grid-template-columns: 1fr 1fr;
  grid-template-rows: 20px 1fr;
  border: 2px solid #000;
  background: ${c.well};
`

const Peak = styled.i`
  border: solid #000;
  border-width: 0 1px 2px;
`

const Level = styled.i`
  margin-bottom: 3px;
  border-bottom: 2px solid #f4ee00;
`

const MeterTicks = styled.div`
  display: flex;
  flex-direction: column;
  justify-content: space-between;
  padding: 22px 0 5px 1px;

  i {
    width: 4px;
    height: 2px;
    background: #8a8a8a;
  }

  i:nth-child(6n + 1) {
    width: 9px;
  }
`

const MeterLabels = styled.ol`
  display: flex;
  flex-direction: column;
  justify-content: space-between;
  margin-bottom: -3px;
  padding: 10px 0 0 7px;
  font-size: 18px;
  line-height: 26px;
`

const Solos = styled.div`
  display: flex;
  gap: 22px;
  padding: 6px 0 24px 38px;

  button {
    width: 36px;
    height: 36px;
    border: 2px solid ${c.line};
    border-radius: 4px;
    background: ${c.well};
    font-size: 19px;
    line-height: 30px;
  }
`

const AudioMeters = () => (
  <Panel>
    <Meters>
      <MeterBox>
        <Peak />
        <Peak />
        <Level />
        <Level />
      </MeterBox>
      <MeterTicks>
        {Array.from({ length: 61 }, (_, i) => (
          <i key={i} />
        ))}
      </MeterTicks>
      <MeterLabels>
        {["0", "-6", "-12", "-18", "-24", "-30", "-36", "-42", "-48", "-54", "dB"].map(n => (
          <li key={n}>{n}</li>
        ))}
      </MeterLabels>
    </Meters>
    <Solos>
      <button>S</button>
      <button>S</button>
    </Solos>
  </Panel>
)

/* ---------- essential graphics ---------- */

const SubTabs = styled.div`
  display: flex;
  gap: 44px;
  margin-top: 28px;
  padding-left: 30px;

  a {
    height: 40px;
    padding-top: 2px;
  }

  a:last-child {
    border-bottom: 4px solid #b9b9b9;
    color: ${c.bright};
  }
`

const LayerList = styled.ul`
  height: 90px;
  margin: 16px 30px 8px 10px;
  border-top: 3px solid ${c.line};
  background: ${c.well};

  li {
    display: flex;
    align-items: center;
    height: 40px;
    padding: 2px 16px;
    color: ${c.icon};
  }

  span {
    padding: 4px 0 0 22px;
    color: ${c.text};
  }
`

const LayerTools = styled.div`
  display: flex;
  justify-content: flex-end;
  gap: 26px;
  padding-right: 48px;
  color: ${c.icon};
`

const Section = styled.h2`
  padding: ${p => p.$pad};
`

const TransformGrid = styled.div`
  display: grid;
  grid-template-columns: 54px 81px 18px 16px 69px 90px 46px 100px 1fr;
  grid-auto-rows: 60px;
  align-items: center;
  padding: 14px 20px 17px 53px;
  color: ${c.icon};
`

const YValue = styled(HotValue)`
  grid-column: 4 / 6;
`

const ScaleLink = styled.span`
  grid-column: 3 / 5;
`

const OpacityRange = styled(Range)`
  grid-column: 5 / 10;
  margin: 0;
`

const Rule = styled.hr`
  height: 3px;
  margin: 0 30px 0 10px;
  border: 0;
  background: #000;
`

const Durations = styled.div`
  display: grid;
  gap: 26px;
  padding: 0 77px 22px 48px;

  label {
    display: flex;
    justify-content: space-between;
  }
`

const RollRow = styled.div`
  padding: 0 48px 16px;
`

const PillButton = styled.button`
  align-self: flex-end;
  height: 40px;
  margin-right: 40px;
  padding: 0 18px;
  border: 3px solid #8a8a8a;
  border-radius: 20px;
  line-height: 30px;
`

const EssentialGraphics = () => (
  <Panel>
    <Tabs $pad={24}>
      <Tab label="Essential Graphics" on plain />
    </Tabs>
    <SubTabs>
      <a href="#browse">Browse</a>
      <a href="#edit">Edit</a>
    </SubTabs>
    <LayerList>
      <li>
        <Icon name="eye" />
        <Spacer $w={62} />
        <Icon name="type" />
        <span>BPO</span>
      </li>
    </LayerList>
    <LayerTools>
      <Icon name="folder" />
      <Icon name="page" />
    </LayerTools>
    <Section $pad="30px 24px 0">Transform</Section>
    <TransformGrid>
      <Icon name="move" />
      <HotValue aria-label="Position X" $w={76} defaultValue="117.1 ," />
      <YValue aria-label="Position Y" $w={60} defaultValue="69.8" />
      <span />
      <Icon name="anchor" />
      <HotValue aria-label="Anchor X" $w={90} defaultValue="172.0 ," />
      <HotValue aria-label="Anchor Y" $w={60} defaultValue="91.5" />
      <Icon name="scale" />
      <HotValue aria-label="Scale" $w={60} defaultValue="100" />
      <ScaleLink>
        <Icon name="link" color={c.hot} />
      </ScaleLink>
      <HotValue aria-label="Scale height" $dim $w={60} defaultValue="100" />
      <span>%</span>
      <Icon name="rotate" />
      <HotValue aria-label="Rotation" $w={60} defaultValue="0" />
      <span />
      <Icon name="checker" />
      <HotValue aria-label="Opacity" $w={96} defaultValue="100.0 %" />
      <OpacityRange type="range" aria-label="Opacity slider" $w={390} $shift="0%" defaultValue="100" />
    </TransformGrid>
    <Rule />
    <Section $pad="22px 18px 26px">Responsive Design — Time</Section>
    <Durations>
      <label>
        Intro Duration
        <HotValue $w={123} defaultValue="00:00:00:00" />
      </label>
      <label>
        Outro Duration
        <HotValue $w={123} defaultValue="00:00:00:00" />
      </label>
    </Durations>
    <RollRow>
      <Check>
        <input type="checkbox" />
        Roll
      </Check>
    </RollRow>
    <PillButton>Show in Text panel</PillButton>
  </Panel>
)

/* ---------- overlays ---------- */

const ShareBanner = styled.div`
  position: absolute;
  top: 50px;
  left: calc(50% - 284px);
  display: flex;
  align-items: center;
  width: 568px;
  height: 48px;
  padding-left: 18px;
  border-radius: 0 0 16px 16px;
  background: #c8500c;
  color: #fff;
  font: 500 25px/32px ${system};

  svg {
    margin-right: 115px;
  }
`

const VideoToast = styled.aside`
  position: absolute;
  top: 41px;
  right: 30px;
  display: flex;
  align-items: center;
  gap: 39px;
  width: 660px;
  height: 90px;
  padding: 2px 0 0 22px;
  border: 1px solid #0c0c0c;
  border-radius: 16px;
  background: #1d1d1d;
  box-shadow: 0 6px 24px rgba(0, 0, 0, 0.3);
  color: #fff;
  font: 500 27px/32px ${system};

  button {
    display: grid;
    place-items: center;
    width: 44px;
    height: 44px;
    border-radius: 50%;
    background: #3b3b3b;
  }
`

/* ---------- desktop and dock ---------- */

const Desktop = styled.div`
  position: relative;
  display: flex;
  justify-content: center;
  height: 114px;
  padding: 2px 0 4px;
  background: #0a0b0b;
  overflow: hidden;
`

const Wallpaper = styled.svg`
  position: absolute;
  top: 0;
  left: 0;
`

const DockBar = styled.ul`
  position: relative;
  display: flex;
  gap: 18px;
  height: 108px;
  padding: 13px 12px 0;
  border: 2px solid #474949;
  border-radius: 32px;
  background: #191b1b;

  li {
    position: relative;
  }
`

const DockItem = styled.button`
  display: block;
  width: 72px;
  height: 72px;
  color: ${p => p.$color};
`

const AdobeTile = styled.span`
  display: grid;
  place-items: center;
  width: 72px;
  height: 72px;
  border-radius: 17px;
  background: ${p => p.$bg};
  font: 600 38px/1 ${ui};
`

const DockDot = styled.i`
  position: absolute;
  bottom: 4px;
  left: 32px;
  width: 8px;
  height: 8px;
  border-radius: 50%;
  background: #9a9a9a;
`

const DockRule = styled.li`
  width: 2px;
  height: 80px;
  margin: -2px 9px 0 10px;
  background: #4f5151;
`

const Badge = styled.span`
  position: absolute;
  top: -9px;
  right: -9px;
  width: 32px;
  height: 32px;
  border-radius: 50%;
  background: #f0382f;
  color: #fff;
  font: 22px/32px ${system};
  text-align: center;
`

const Art = ({ children }) => (
  <svg width="72" height="72" viewBox="0 0 72 72" overflow="visible" aria-hidden="true">
    {children}
  </svg>
)

const Tile = ({ fill }) => <rect width="72" height="72" rx="17" fill={fill} />

const letter = { fill: "#fff", fontFamily: "Noto Sans, sans-serif", fontWeight: 600, fontSize: 22, textAnchor: "middle" }

const webex = (
  <>
    <Tile fill="#17181a" />
    <g fill="none" strokeWidth="10" strokeLinecap="round">
      <path d="M60 28C58 44 54 53 46 53" stroke="#2b5cf5" />
      <path d="M22 53C36 53 36 18 48 18" stroke="#2450e0" />
      <path d="M47 18q13-1 12 14" stroke="#3fce62" />
      <path d="M10 26C11 42 15 53 22 53" stroke="#12b6e8" />
      <path d="M10 26C10 19 15 18 20 18 32 18 32 53 46 53" stroke="#3a6cff" />
    </g>
  </>
)

const office = (dark, ch, body) => (
  <>
    <Tile fill="#fff" />
    {body}
    <rect x="7" y="22" width="26" height="27" rx="3" fill={dark} />
    <text x="20" y="43" {...letter}>{ch}</text>
  </>
)

const folder = top => (
  <>
    {top}
    <path d="M1 14q0-4 4-4h14l6 6h44q3 0 3 4v47q0 5-4 5H5q-4 0-4-5z" fill="#2d9fd2" />
    <path d="M1 21h71v46q0 4-4 4H5q-4 0-4-4z" fill="#5cc8f8" />
  </>
)

const dock = [
  {
    name: "Finder",
    run: true,
    art: (
      <>
        <Tile fill="#e3e8f0" />
        <path d="M17 0h23q-8 18-9 42h10q0 16 3 30H17Q0 72 0 55V17Q0 0 17 0z" fill="url(#finder)" />
        <path d="M19 21v6M53 21v6M14 47q22 20 44 0" fill="none" stroke="#15233a" strokeWidth="3" strokeLinecap="round" />
      </>
    ),
  },
  {
    name: "Launchpad",
    art: (
      <>
        <Tile fill="#adadaf" />
        {["#5ed94d", "#f9c21d", "#f5922b", "#d7221b", "#a6abaf", "#f5476a", "#9b4fd0", "#2694f2", "#3dcba4"].map((fill, i) => (
          <rect key={fill} x={12 + (i % 3) * 18} y={12 + Math.floor(i / 3) * 18} width="13" height="13" rx="3" fill={fill} />
        ))}
      </>
    ),
  },
  {
    name: "Calendar",
    badge: 4,
    art: (
      <>
        <Tile fill="#f8f7f5" />
        <path d="M0 22v-5Q0 0 17 0h38q17 0 17 17v5z" fill="#f2504b" />
        <text x="34" y="18" {...letter} fontSize="15">AUG</text>
        <text x="36" y="60" {...letter} fill="#2a2a2a" fontFamily="Inter, sans-serif" fontWeight="300" fontSize="44">1</text>
      </>
    ),
  },
  {
    name: "Mail",
    art: (
      <>
        <Tile fill="url(#mail)" />
        <rect x="11" y="20" width="50" height="32" rx="3" fill="#f1efec" />
        <path d="M12 21l20 19q4 4 8 0l20-19M12 51l17-15M60 51L43 36" fill="none" stroke="#8e8e8e" strokeWidth="2" />
      </>
    ),
  },
  {
    name: "Outlook",
    run: true,
    art: (
      <>
        <Tile fill="#fff" />
        <path d="M20 14q0-2 2-2h34q3 0 3 3v44H20z" fill="#0f5fb2" />
        <path d="M33 20h13v14H33z" fill="#1a8be0" />
        <path d="M46 20h13v14H46zM33 34h13v13H33z" fill="#39b5f2" />
        <path d="M20 38l20 12 19-12v21H20z" fill="#2aa5ea" />
        <rect x="7" y="22" width="27" height="28" rx="3" fill="#0b6bc4" />
        <circle cx="20" cy="36" r="7" fill="none" stroke="#fff" strokeWidth="3.5" />
      </>
    ),
  },
  {
    name: "WhatsApp",
    run: true,
    art: (
      <>
        <Tile fill="#25cf3f" />
        <FaWhatsapp x="7" y="7" size={58} color="#fff" />
      </>
    ),
  },
  {
    name: "Spotify",
    run: true,
    art: <FaSpotify size={72} color="#1ed760" />,
  },
  {
    name: "Slack",
    run: true,
    art: (
      <>
        <Tile fill="#fff" />
        <g strokeWidth="10" strokeLinecap="round">
          <path d="M30 16v0M16 30h14" stroke="#36c5f0" />
          <path d="M43 16v14M56 30v0" stroke="#2eb67d" />
          <path d="M43 43h13M43 56v0" stroke="#ecb22e" />
          <path d="M30 43v13M16 43v0" stroke="#e01e5a" />
        </g>
      </>
    ),
  },
  {
    name: "Chrome",
    run: true,
    art: (
      <>
        <Tile fill="#efefef" />
        <circle cx="36" cy="37" r="31" fill="#fbbf12" />
        <path d="M9 21.5a31 31 0 0 1 54 0H36L28 43z" fill="#e33b2e" />
        <path d="M9 21.5A31 31 0 0 0 34 68l14-24-24-2z" fill="#2ba24c" />
        <circle cx="36" cy="37" r="15" fill="#fff" />
        <circle cx="36" cy="37" r="12" fill="#2f78ea" />
      </>
    ),
  },
  {
    name: "Notion",
    run: true,
    art: (
      <>
        <path d="M3 5l44-5 22 13q2 1 2 4v50q0 4-4 4l-48 2q-3 0-5-3L2 56V9z" fill="#fff" stroke="#fff" strokeWidth="2" />
        <path d="M5 6l41-4 21 14-48 3zM5 10l12 13v44L4 54z" fill="none" stroke="#111" strokeWidth="2.5" />
        <path d="M19 22l48-3v48l-48 2z" fill="#fff" stroke="#111" strokeWidth="3" />
        <text x="43" y="60" fontFamily="Liberation Serif, serif" fontWeight="700" fontSize="46" textAnchor="middle">N</text>
      </>
    ),
  },
  {
    name: "Notes",
    run: true,
    art: (
      <>
        <Tile fill="#f2f0ea" />
        <path d="M0 18v-1Q0 0 17 0h38q17 0 17 17v1z" fill="#fdc913" />
        <path d="M0 21h72" stroke="#b5b2a8" strokeWidth="2" strokeDasharray="1 2" />
        <path d="M0 36h72M0 54h72" stroke="#cfcdc6" strokeWidth="1.5" />
      </>
    ),
  },
  { name: "Photoshop", tile: "Ps", bg: "#001d34", color: "#31a8ff" },
  { name: "Illustrator", tile: "Ai", bg: "#300000", color: "#ff9a00" },
  { name: "XD", tile: "Xd", bg: "#450135", color: "#ff61f6" },
  { name: "Premiere Pro", tile: "Pr", bg: "#00005b", color: "#9999ff", run: true },
  { name: "After Effects", tile: "Ae", bg: "#00005b", color: "#9999ff" },
  {
    name: "Figma",
    art: (
      <>
        <Tile fill="#1f1f20" />
        <path d="M36 10h-8a8.5 8.5 0 0 0 0 17h8z" fill="#ff4a1f" />
        <path d="M36 10h8a8.5 8.5 0 0 1 0 17h-8z" fill="#ff7262" />
        <path d="M36 27h-8a8.5 8.5 0 0 0 0 17h8z" fill="#a259ff" />
        <circle cx="44" cy="35.5" r="8.5" fill="#1abcfe" />
        <path d="M36 44h-8a8.5 8.5 0 1 0 8 8.5z" fill="#0acf83" />
      </>
    ),
  },
  {
    name: "Blender",
    run: true,
    art: (
      <>
        <path d="M-1 55L30 30H11q-3-6 2-9h27L35 5q3-5 8 1l18 19q20 16 12 32c-9 17-41 16-46-7L7 60q-7 2-8-5z" fill="#e87d0d" />
        <ellipse cx="48" cy="42" rx="17" ry="15" fill="#fff" />
        <circle cx="49" cy="42" r="10" fill="#265787" />
      </>
    ),
  },
  {
    name: "Word",
    art: office("#185abd", "W", (
      <>
        <rect x="20" y="12" width="40" height="48" rx="3" fill="#103f91" />
        <path d="M20 15q0-3 3-3h34q3 0 3 3v9H20z" fill="#41a5ee" />
        <path d="M20 24h40v12H20z" fill="#2b7cd3" />
        <path d="M20 36h40v12H20z" fill="#185abd" />
      </>
    )),
  },
  {
    name: "PowerPoint",
    art: office("#c43e1c", "P", (
      <>
        <circle cx="37" cy="36" r="24" fill="#ed6c47" />
        <path d="M37 12a24 24 0 0 1 24 24H37z" fill="#ff8f6b" />
        <path d="M13 36h48a24 24 0 0 1-48 0z" fill="#d35230" />
      </>
    )),
  },
  {
    name: "Excel",
    run: true,
    art: office("#107c41", "X", (
      <>
        <rect x="18" y="12" width="42" height="48" rx="3" fill="#185c37" />
        <path d="M18 15q0-3 3-3h18v12H18z" fill="#21a366" />
        <path d="M39 12h18q3 0 3 3v9H39z" fill="#33c481" />
        <path d="M18 24h21v12H18z" fill="#107c41" />
        <path d="M39 24h21v12H39z" fill="#21a366" />
        <path d="M39 36h21v12H39z" fill="#107c41" />
      </>
    )),
  },
  {
    name: "VPN",
    art: (
      <>
        <circle cx="36" cy="36" r="37" fill="#e6e8e9" />
        <path d="M42 0q8 1 10 3-9 7-10 17 2 16 22 22l-3 6Q34 44 31 24 14 26 4 45-2 38 1 30q12-14 30-15Q34 4 42 0z" fill="#5fae2e" />
        <path d="M32 20q3 22 24 25l16-3-2 8q-11 2-13 20-6 3-13 3 8-14 4-24Q26 44 27 21z" fill="#3aa0dc" />
        <path d="M36 20q4 18 22 21" fill="none" stroke="#2a86a8" strokeWidth="4" />
      </>
    ),
  },
  { name: "Webex", run: true, art: webex },
  null,
  {
    name: "Webex Meeting",
    run: true,
    art: (
      <>
        {webex}
        <path d="M42 48q0-6 6-6h24v24q0 6-6 6H42z" fill="#fff" />
        <path d="M47 52q0-2 2-2h10q2 0 2 2l5-2v13l-5-2q0 3-2 3H49q-2 0-2-3z" fill="#1aa06d" />
      </>
    ),
  },
  {
    name: "QuickTime",
    run: true,
    art: (
      <>
        <Tile fill="#2c2f34" />
        <circle cx="36" cy="35" r="24" fill="#1f8ef0" stroke="#cdd8e6" strokeWidth="9" />
        <path d="M38 36l9-3 17 27v5H54z" fill="#c2c8d0" />
        <circle cx="33" cy="34" r="9" fill="#48b9ff" />
      </>
    ),
  },
  null,
  { name: "Documents", art: folder(<><path d="M10 0h17l5 8H9z" fill="#3bb0e6" /><path d="M32 5h37v12H40z" fill="#2d2f31" /></>) },
  { name: "Downloads", art: folder(<><path d="M16-6h36v6H16z" fill="#00005b" stroke="#8a86f0" strokeWidth="2" /><path d="M12-2h48v18H12z" fill="#2b2728" /></>) },
  {
    name: "Trash",
    art: (
      <>
        <path d="M8 8l8-13 10 7 12-8 8 7 12-2 6 9v6H8z" fill="#e2e2e2" />
        <path d="M18 2l8 8M34-4l-4 13 10-4M48 0l-4 9 12-6" stroke="#9c5a46" strokeWidth="2" fill="none" />
        <path d="M6 8q30 8 60 0l-6 60q-1 5-8 6-16 2-32 0-7-1-8-6z" fill="url(#bin)" />
      </>
    ),
  },
]

const Dock = () => (
  <DockBar>
    {dock.map((app, i) =>
      app ? (
        <li key={app.name}>
          <DockItem aria-label={app.name} $color={app.color}>
            {app.tile ? <AdobeTile $bg={app.bg}>{app.tile}</AdobeTile> : <Art>{app.art}</Art>}
          </DockItem>
          {app.badge && <Badge>{app.badge}</Badge>}
          {app.run && <DockDot />}
        </li>
      ) : (
        <DockRule key={i} />
      )
    )}
  </DockBar>
)

const Stone = () => (
  <Wallpaper width="100%" height="114" aria-hidden="true">
    <defs>
      <filter id="grain" x="0" y="0" width="100%" height="100%">
        <feTurbulence type="fractalNoise" baseFrequency=".18 .24" numOctaves="4" seed="4" />
        <feDiffuseLighting lightingColor="#bdbcb0" surfaceScale="4" diffuseConstant="1">
          <feDistantLight azimuth="225" elevation="38" />
        </feDiffuseLighting>
      </filter>
      <linearGradient id="shade">
        <stop offset="0" stopColor="#000" stopOpacity=".05" />
        <stop offset=".08" stopColor="#000" stopOpacity=".2" />
        <stop offset=".14" stopColor="#000" stopOpacity=".6" />
        <stop offset=".3" stopColor="#000" stopOpacity=".95" />
        <stop offset="1" stopColor="#000" stopOpacity=".93" />
      </linearGradient>
      <linearGradient id="top" x2="0" y2="1">
        <stop offset="0" stopColor="#000" stopOpacity=".55" />
        <stop offset=".5" stopColor="#000" stopOpacity="0" />
      </linearGradient>
      <linearGradient id="finder" x2="0" y2="1">
        <stop offset="0" stopColor="#1fc3fb" />
        <stop offset="1" stopColor="#1e6ff0" />
      </linearGradient>
      <linearGradient id="mail" x2="0" y2="1">
        <stop offset="0" stopColor="#1d6ff2" />
        <stop offset="1" stopColor="#1ac5fa" />
      </linearGradient>
      <linearGradient id="bin">
        <stop offset="0" stopColor="#6d6d6d" />
        <stop offset=".4" stopColor="#b3b3b3" />
        <stop offset="1" stopColor="#5c5c5c" />
      </linearGradient>
    </defs>
    <rect width="100%" height="114" filter="url(#grain)" />
    <rect width="100%" height="114" fill="url(#shade)" />
    <rect width="100%" height="114" fill="url(#top)" />
    <path d="M300 114Q390 76 500 50v64z" fill="#05080a" opacity=".8" />
  </Wallpaper>
)

const menus = ["File", "Edit", "Clip", "Sequence", "Markers", "Graphics and Titles", "View", "Window", "Help"]

const SystemMenu = () => (
  <MenuBar>
    <FaApple size={30} />
    <ul>
      <li>
        <AppName>Premiere Pro</AppName>
      </li>
      {menus.map(m => (
        <li key={m}>{m}</li>
      ))}
    </ul>
    <Status>
      <svg width="12" height="20" viewBox="0 0 12 20" fill="none" stroke="currentColor" strokeWidth="3">
        <path d="M10 1L4 10l6 9" />
      </svg>
      <svg width="28" height="28" viewBox="0 0 28 28" fill="currentColor">
        <circle cx="14" cy="14" r="12" fill="none" stroke="currentColor" strokeWidth="2.5" />
        <path d="M10 8l10 6-10 6z" />
      </svg>
      <svg width="50" height="26" viewBox="0 0 50 26" fill="currentColor">
        <rect x="1" y="2" width="44" height="22" rx="6" fill="none" stroke="#8c8c8c" strokeWidth="2" />
        <rect x="4" y="5" width="38" height="16" rx="3" />
        <path d="M47 9q3 1 3 4t-3 4z" fill="#8c8c8c" />
        <path d="M26 1L14 15h7l-2 10 13-14h-8z" stroke="#0a0a0a" strokeWidth="2" />
      </svg>
      <svg width="34" height="24" viewBox="0 0 34 24" fill="none" stroke="currentColor" strokeWidth="4">
        <path d="M2 9q15-13 30 0M8 15q9-8 18 0" />
        <path d="M17 24l-5-5q5-4 10 0z" fill="currentColor" stroke="none" />
      </svg>
      <svg width="20" height="28" viewBox="0 0 20 28" fill="none" stroke="currentColor" strokeWidth="2.5">
        <path d="M2 8l15 12-8 6V2l8 6L2 20" />
      </svg>
      <svg width="28" height="28" viewBox="0 0 28 28" fill="currentColor">
        <path d="M4 22C-2 4 8 2 14 2s16 2 10 20" fill="none" stroke="currentColor" strokeWidth="2.5" />
        <path d="M4 15q5 0 5 12-5 0-5-12zM24 15q-5 0-5 12 5 0 5-12z" stroke="currentColor" strokeWidth="2" />
      </svg>
      <svg width="30" height="28" viewBox="0 0 30 28">
        <rect x="1.5" y="2" width="27" height="10" rx="5" fill="none" stroke="currentColor" strokeWidth="2.5" />
        <circle cx="7" cy="7" r="4" fill="currentColor" />
        <rect x="0" y="15" width="30" height="13" rx="6" fill="currentColor" />
        <circle cx="22" cy="21.5" r="4" fill="#0a0a0a" />
      </svg>
      <PrivacyDot />
      <time>12:54 PM</time>
    </Status>
  </MenuBar>
)

const App = () => (
  <>
    <GlobalStyle />
    <Frame>
      <SystemMenu />
      <Window>
        <TitleBar>
          <TitleLeft>
            <Light $color="#ff5f57" aria-label="Close" />
            <Light $color="#febc2e" aria-label="Minimize" />
            <Light $color="#28c840" aria-label="Zoom" />
            <Home aria-label="Home">
              <Icon name="home" />
            </Home>
            <Mode href="#import">Import</Mode>
            <Mode href="#edit" $on>Edit</Mode>
            <Mode href="#export">Export</Mode>
          </TitleLeft>
          <h1>Untitled - Edited</h1>
        </TitleBar>
        <Workspace>
          <Columns>
            <TopRow>
              <EffectControls />
              <Tools />
              <Program />
            </TopRow>
            <BottomRow>
              <Project />
              <Timeline />
              <AudioMeters />
            </BottomRow>
          </Columns>
          <EssentialGraphics />
        </Workspace>
        <StatusBar>
          <svg width="30" height="26" viewBox="0 0 30 26">
            <circle cx="18" cy="12" r="11" fill="#b0b0b0" />
            <circle cx="8" cy="16" r="8" fill="#b0b0b0" />
            <path d="M8 15h12v9H8z" fill="#b0b0b0" />
            <path d="M4 18q-1-7 5-7 3 0 6 4l5 5M11 10q3-5 8-4 7 2 5 9-1 5-6 4" fill="none" stroke="#262626" strokeWidth="2" />
          </svg>
        </StatusBar>
      </Window>
      <Desktop>
        <Stone />
        <Dock />
      </Desktop>
      <ShareBanner role="status">
        <svg width="10" height="28" viewBox="0 0 10 28" stroke="#fff" strokeWidth="2" strokeDasharray="4 4">
          <path d="M1 0v28M8 0v28" />
        </svg>
        You're sharing your screen
      </ShareBanner>
      <VideoToast>
        <button aria-label="Expand panel">
          <Icon name="right" />
        </button>
        Expand panel to show video
      </VideoToast>
    </Frame>
  </>
)

export default App
